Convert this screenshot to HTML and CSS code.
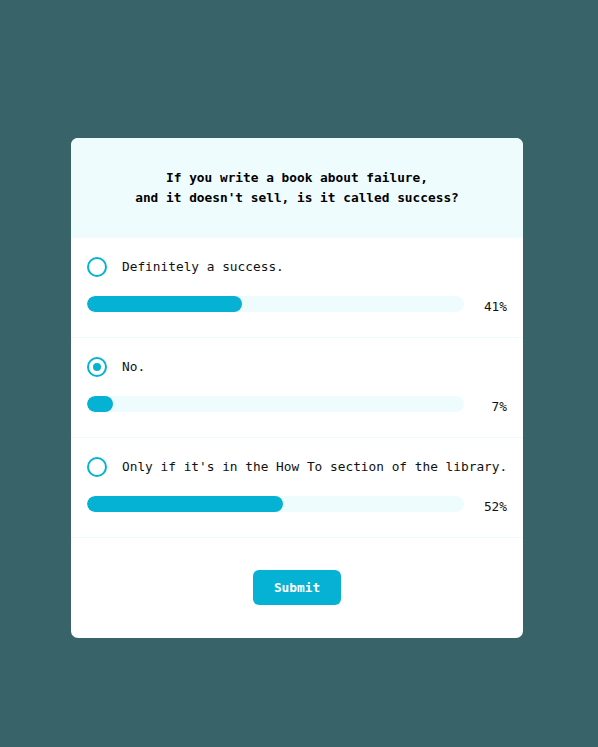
FILE: index.html
```html
<!DOCTYPE html>
<html>
<head>
<meta charset="utf-8">
<link rel="stylesheet" href="styles.css">
</head>
<body>
<div class="card">
  <div class="question">If you write a book about failure,<br>and it doesn't sell, is it called success?</div>
  <div class="option">
    <div class="label"><span class="radio"></span><span>Definitely a success.</span></div>
    <div class="result"><div class="track"><div class="fill" style="width:41%"></div></div><span class="pct">41%</span></div>
  </div>
  <div class="option">
    <div class="label"><span class="radio checked"></span><span>No.</span></div>
    <div class="result"><div class="track"><div class="fill" style="width:7%"></div></div><span class="pct">7%</span></div>
  </div>
  <div class="option">
    <div class="label"><span class="radio"></span><span>Only if it's in the How To section of the library.</span></div>
    <div class="result"><div class="track"><div class="fill" style="width:52%"></div></div><span class="pct">52%</span></div>
  </div>
  <div class="footer"><button class="submit">Submit</button></div>
</div>
</body>
</html>
```
FILE: styles.css
```css
html, body { margin: 0; padding: 0; }
body {
  background: #386469;
  font-family: "DejaVu Sans Mono", monospace;
  font-size: 12.8px;
  color: #111;
  height: 747px;
  padding-top: 138px;
  box-sizing: border-box;
}
.card {
  margin-left: 71px;
  width: 452px;
  background: #fff;
  border-radius: 7px;
  overflow: hidden;
}
.question {
  background: #effcfd;
  padding: 30px 16px;
  text-align: center;
  font-weight: bold;
  line-height: 20px;
  color: #000;
}
.option {
  padding: 19px 16px 0;
  height: 100px;
  box-sizing: border-box;
  border-bottom: 1px solid #eefbfc;
  display: flex;
  flex-direction: column;
  gap: 19px;
}
.label {
  display: flex;
  align-items: center;
  gap: 15px;
  height: 20px;
  line-height: 20px;
  white-space: nowrap;
}
.radio {
  width: 20px;
  height: 20px;
  box-sizing: border-box;
  border: 2px solid #06b2d4;
  border-radius: 50%;
  display: flex;
  align-items: center;
  justify-content: center;
  flex: none;
}
.radio.checked::after {
  content: "";
  width: 8px;
  height: 8px;
  border-radius: 50%;
  background: #06b2d4;
}
.result {
  display: flex;
  align-items: center;
  height: 16px;
}
.track {
  width: 377px;
  height: 16px;
  border-radius: 8px;
  background: #effcfd;
  overflow: hidden;
}
.fill {
  height: 100%;
  background: #06b2d4;
  border-radius: 8px;
}
.pct {
  flex: 1;
  text-align: right;
  padding-top: 5px;
}
.footer {
  height: 100px;
  padding-bottom: 2px;
  box-sizing: border-box;
  display: flex;
  align-items: center;
  justify-content: center;
}
.submit {
  width: 88px;
  height: 35px;
  border: none;
  border-radius: 6px;
  background: #06b2d4;
  color: #fff;
  font-family: "DejaVu Sans Mono", monospace;
  font-size: 12.8px;
  font-weight: bold;
}
```
